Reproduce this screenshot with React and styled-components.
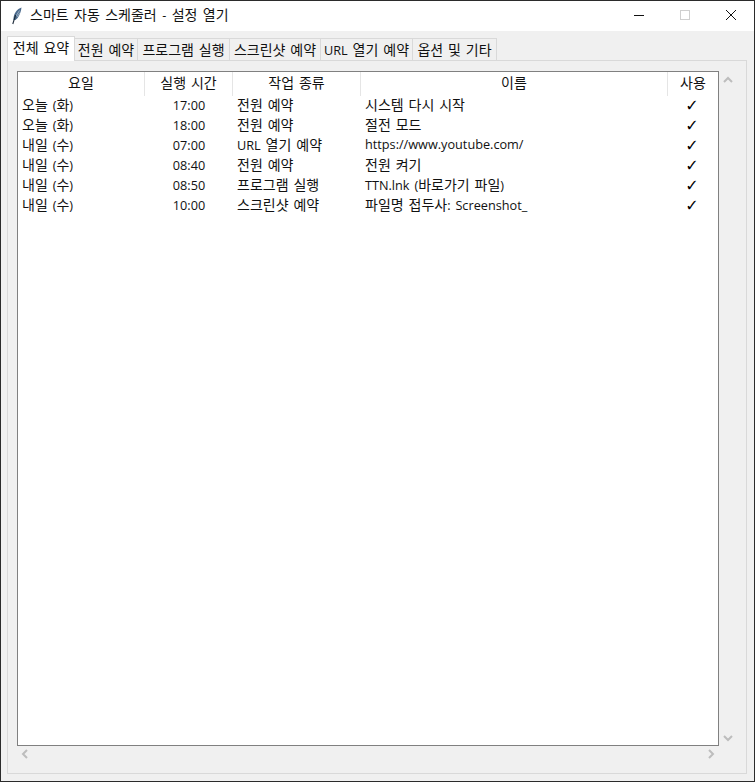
import React from 'react'
import styled, { createGlobalStyle } from 'styled-components'

const GlobalStyle = createGlobalStyle`
  html, body {
    margin: 0;
    padding: 0;
    background: #f0f0f0;
  }
  body {
    font-family: "Open Sans", "Noto Sans CJK KR", sans-serif;
    font-size: 12.7px;
    line-height: 18px;
    word-spacing: 1.6px;
    color: #111;
  }
`

const StyledWindow = styled.div`
  border: 1px solid #2b2b2b;
  box-sizing: border-box;
  display: flex;
  flex-direction: column;
  height: 782px;
  width: 755px;
  background: #f0f0f0;
`

const StyledTitleBar = styled.div`
  align-items: center;
  background: #fff;
  display: flex;
  flex: none;
  height: 30px;
`

const StyledFeather = styled.svg`
  flex: none;
  height: 18px;
  margin-left: 11px;
  width: 10px;
`

const StyledTitle = styled.div`
  flex: 1;
  margin-left: 8px;
  padding-bottom: 3px;
  white-space: nowrap;
  word-spacing: 2.1px;
`

const StyledWindowButton = styled.div`
  align-items: center;
  display: flex;
  flex: none;
  height: 28px;
  justify-content: center;
  padding-bottom: 2px;
  width: 46px;
`

const StyledTabArea = styled.div`
  display: flex;
  flex: 1;
  flex-direction: column;
  padding: 5px 7px 7px 6px;
`

const StyledTabs = styled.div`
  align-items: flex-end;
  display: flex;
  flex: none;
  height: 25px;
  position: relative;
  z-index: 1;
`

const StyledTab = styled.div`
  align-items: center;
  background: ${props => (props.$active ? '#fff' : '#f0f0f0')};
  border: 1px solid #d9d9d9;
  border-bottom: ${props => (props.$active ? 'none' : '1px solid #d9d9d9')};
  border-left: ${props => (props.$first ? '1px solid #d9d9d9' : 'none')};
  box-sizing: border-box;
  display: flex;
  height: ${props => (props.$active ? '25px' : '23px')};
  justify-content: center;
  padding-bottom: ${props => (props.$active ? '4px' : '1px')};
  white-space: nowrap;
  width: ${props => props.$width}px;
`

const StyledPanel = styled.div`
  border: 1px solid #d9d9d9;
  box-sizing: border-box;
  display: grid;
  flex: 1;
  grid-template-columns: 702px 1fr;
  grid-template-rows: 675px 1fr;
  margin-top: -1px;
  padding: 10px 0 0 9px;
`

const StyledTree = styled.div`
  background: #fff;
  border: 1px solid #808080;
  box-sizing: border-box;
  overflow: hidden;
`

const StyledRow = styled.div`
  display: grid;
  grid-template-columns: 127px 88px 128px 307px 50px;
  height: ${props => (props.$header ? '24px' : '20px')};
`

const StyledHeaderCell = styled.div`
  align-items: center;
  border-right: ${props => (props.$last ? 'none' : '1px solid #e5e5e5')};
  display: flex;
  justify-content: center;
  padding-bottom: 4px;
  white-space: nowrap;
`

const StyledCell = styled.div`
  align-items: center;
  display: flex;
  justify-content: ${props => (props.$center ? 'center' : 'flex-start')};
  line-height: 14px;
  padding-bottom: ${props => (props.$center ? '2px' : '4px')};
  padding-left: ${props => (props.$center ? '0' : '4px')};
  white-space: pre;
`

const StyledCheck = styled.span`
  color: #000;
  display: block;
  font-family: "DejaVu Sans", sans-serif;
  font-size: 16px;
  font-weight: bold;
  margin: 2px 2px 0 0;
`

const StyledHangul = styled.span`
  font-family: "Noto Sans CJK KR", sans-serif;
  font-size: 14px;
`

const StyledVerticalScroll = styled.div`
  align-items: center;
  display: flex;
  flex-direction: column;
  justify-content: space-between;
  padding: 4px 0 3px;
  width: 17px;
`

const StyledHorizontalScroll = styled.div`
  align-items: center;
  display: flex;
  height: 16px;
  justify-content: space-between;
  padding: 0 3px;
`

const Chevron = ({ d }) => (
  <svg width="10" height="10" viewBox="0 0 10 10">
    <path d={d} fill="none" stroke="#bdbdbd" strokeWidth="2" />
  </svg>
)

// hangul runs sit larger than the latin text around them
const Label = ({ text }) => (
  <span>
    {text.split(/([\uac00-\ud7a3]+)/).map((part, i) =>
      i % 2 ? <StyledHangul key={i}>{part}</StyledHangul> : part
    )}
  </span>
)

const tabs = [
  { label: '전체 요약', width: 68 },
  { label: '전원 예약', width: 63 },
  { label: '프로그램 실행', width: 92 },
  { label: '스크린샷 예약', width: 91 },
  { label: 'URL 열기 예약', width: 92 },
  { label: '옵션 및 기타', width: 84 },
]

const headers = ['요일', '실행 시간', '작업 종류', '이름', '사용']

const rows = [
  ['오늘 (화)', '17:00', '전원 예약', '시스템 다시 시작'],
  ['오늘 (화)', '18:00', '전원 예약', '절전 모드'],
  ['내일 (수)', '07:00', 'URL 열기 예약', 'https://www.youtube.com/'],
  ['내일 (수)', '08:40', '전원 예약', '전원 켜기'],
  ['내일 (수)', '08:50', '프로그램 실행', 'TTN.lnk (바로가기 파일)'],
  ['내일 (수)', '10:00', '스크린샷 예약', '파일명 접두사: Screenshot_'],
]

const App = () => (
  <>
    <GlobalStyle />
    <StyledWindow>
      <StyledTitleBar>
        <StyledFeather viewBox="0 0 10 18">
          <path d="M9.5 0.5 C5 2 2 6 1.5 11 L1.5 13 L3.5 13 C6.5 11 8.8 6 9.5 0.5 Z" fill="#4a6a8c" />
          <path d="M7.5 3.5 L4 9 M8 5.5 L5 10" stroke="#b9c9d8" strokeWidth="0.7" fill="none" />
          <path d="M0.8 17 L3.6 8" stroke="#1d2b3a" strokeWidth="1.1" fill="none" />
        </StyledFeather>
        <StyledTitle><Label text="스마트 자동 스케줄러 - 설정 열기" /></StyledTitle>
        <StyledWindowButton>
          <svg width="10" height="10" viewBox="0 0 10 10">
            <path d="M0 5.5 H10" stroke="#111" strokeWidth="1" />
          </svg>
        </StyledWindowButton>
        <StyledWindowButton>
          <svg width="10" height="10" viewBox="0 0 10 10">
            <rect x="0.5" y="0.5" width="9" height="9" fill="none" stroke="#cfcfcf" />
          </svg>
        </StyledWindowButton>
        <StyledWindowButton>
          <svg width="10" height="10" viewBox="0 0 10 10">
            <path d="M0 0 L10 10 M10 0 L0 10" stroke="#111" strokeWidth="1" />
          </svg>
        </StyledWindowButton>
      </StyledTitleBar>
      <StyledTabArea>
        <StyledTabs>
          {tabs.map((tab, i) => (
            <StyledTab key={tab.label} $active={i === 0} $first={i === 0} $width={tab.width}>
              <Label text={tab.label} />
            </StyledTab>
          ))}
        </StyledTabs>
        <StyledPanel>
          <StyledTree>
            <StyledRow $header>
              {headers.map((h, i) => (
                <StyledHeaderCell key={h} $last={i === headers.length - 1}>
                  <Label text={h} />
                </StyledHeaderCell>
              ))}
            </StyledRow>
            {rows.map(row => (
              <StyledRow key={row[1]}>
                <StyledCell><Label text={row[0]} /></StyledCell>
                <StyledCell $center>{row[1]}</StyledCell>
                <StyledCell><Label text={row[2]} /></StyledCell>
                <StyledCell><Label text={row[3]} /></StyledCell>
                <StyledCell $center><StyledCheck>✓</StyledCheck></StyledCell>
              </StyledRow>
            ))}
          </StyledTree>
          <StyledVerticalScroll>
            <Chevron d="M1 7 L5 3 L9 7" />
            <Chevron d="M1 3 L5 7 L9 3" />
          </StyledVerticalScroll>
          <StyledHorizontalScroll>
            <Chevron d="M7 1 L3 5 L7 9" />
            <Chevron d="M3 1 L7 5 L3 9" />
          </StyledHorizontalScroll>
        </StyledPanel>
      </StyledTabArea>
    </StyledWindow>
  </>
)

export default App
